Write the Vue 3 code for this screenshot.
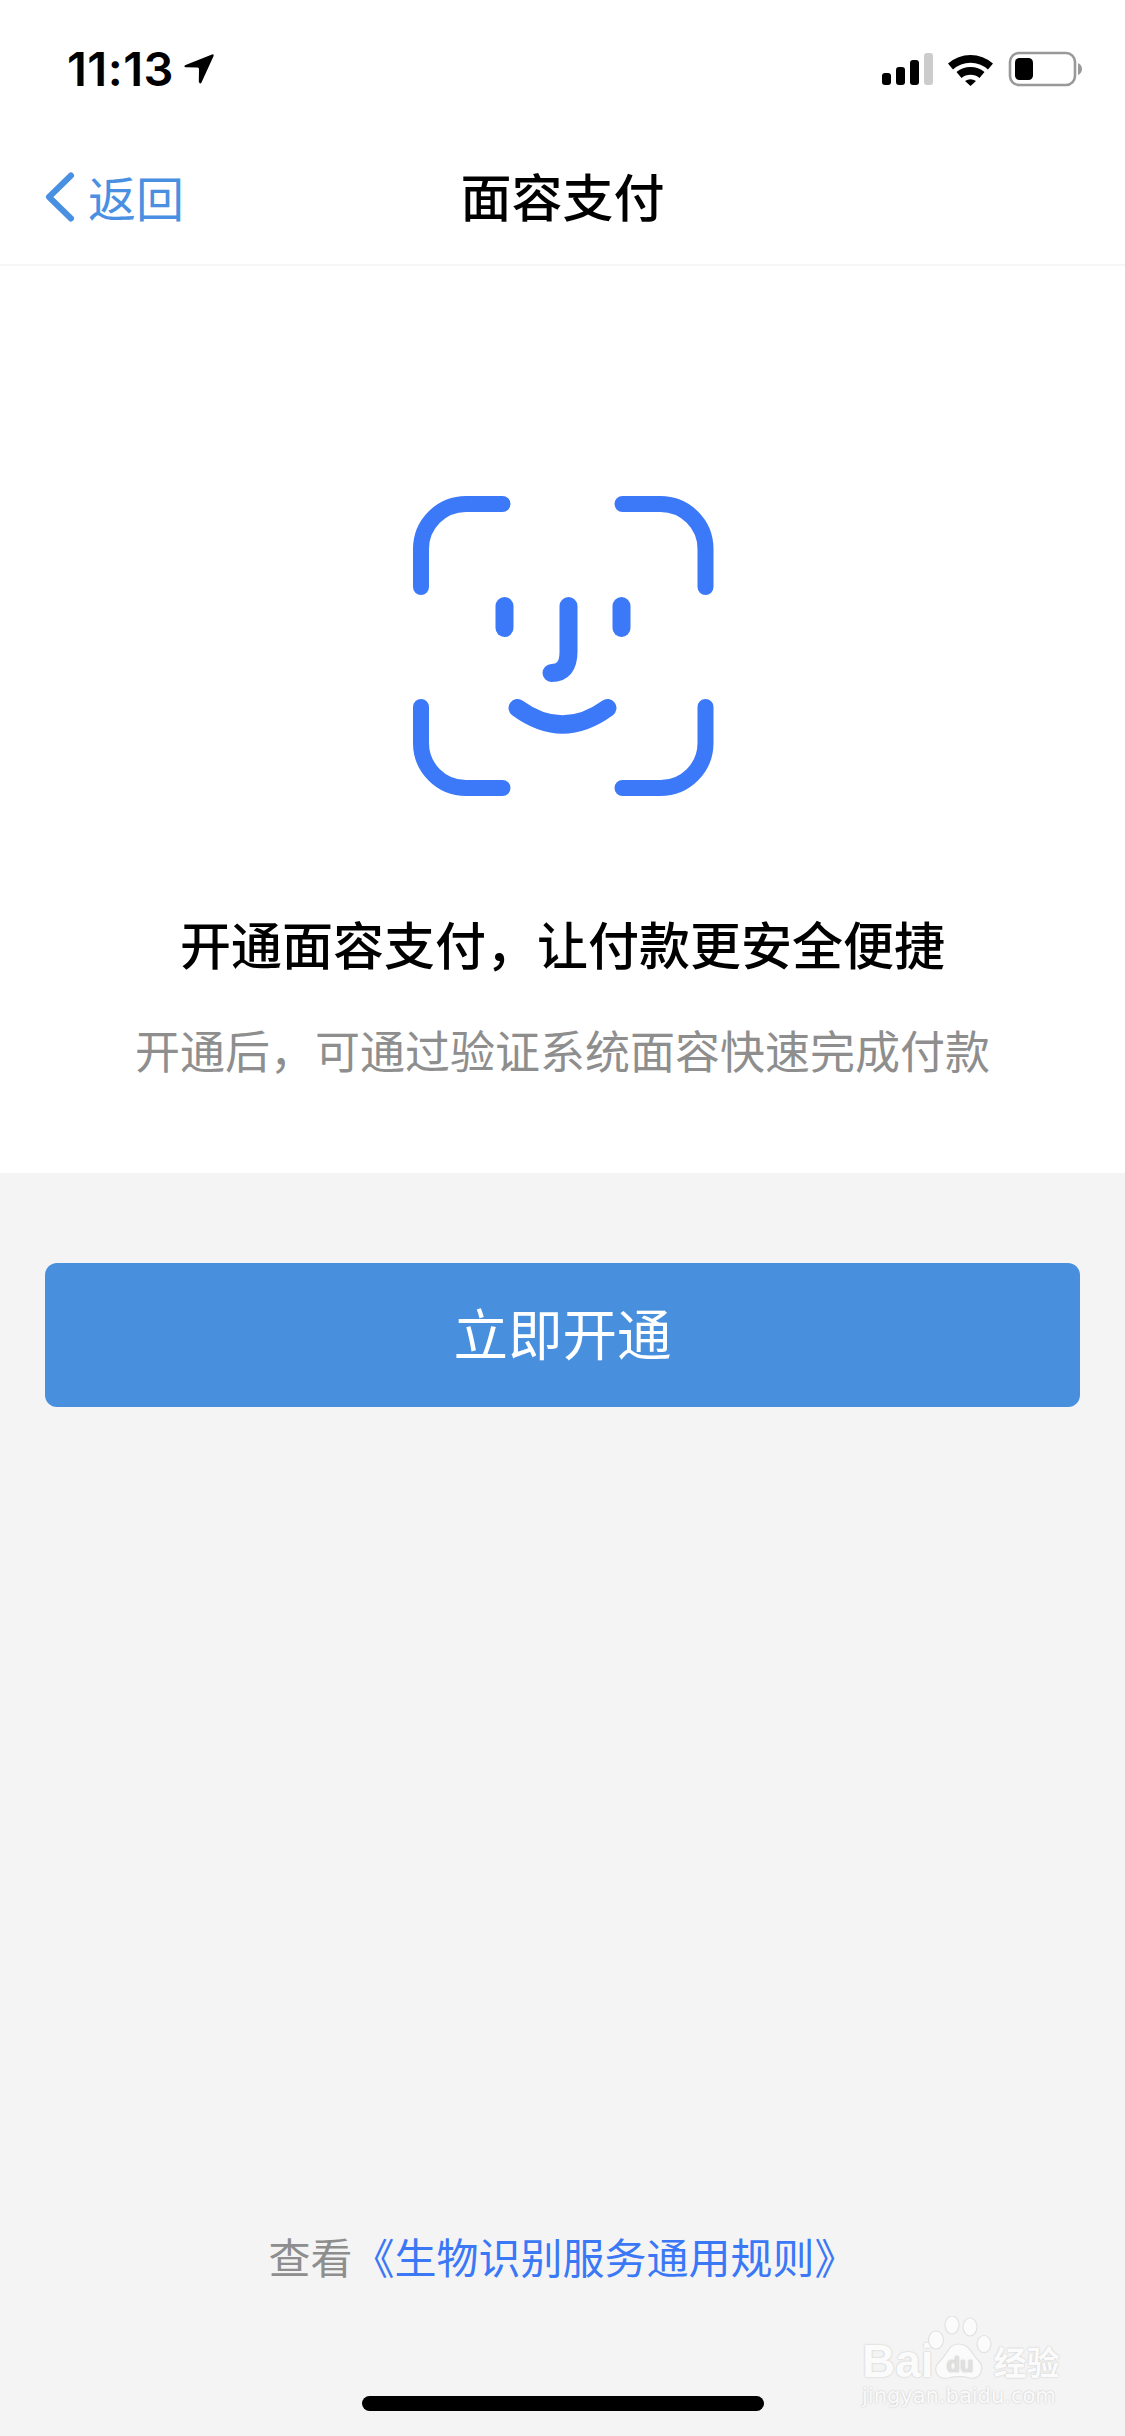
<script setup>
const bars = [
  { x: 882, y: 73, h: 12, c: '#000' },
  { x: 896, y: 67, h: 18, c: '#000' },
  { x: 910, y: 60, h: 25, c: '#000' },
  { x: 924, y: 53, h: 32, c: '#ccc' }
]
</script>

<template>
  <div class="page">
    <div class="top">
      <div class="status">
        <div class="clock">
          <span class="time">11:13</span>
          <svg class="arrow" width="30" height="30" viewBox="183 54 30 30">
            <path d="M211 54.4 L184.6 65 Q182 66.4 184.5 67.3 L196.5 67.6 Q198 67.7 198 69 L197.8 81.8 Q199 84.8 200.6 82.2 L212.6 56 Q213 53.9 211 54.4Z" fill="#000" />
          </svg>
        </div>
        <svg class="indicators" width="204" height="36" viewBox="880 51 204 36">
          <rect v-for="b in bars" :key="b.x" :x="b.x" :y="b.y" width="9" :height="b.h" rx="3" :fill="b.c" />
          <path d="M948 63.5 A34 34 0 0 1 993 63.5 L988 69.5 A26 26 0 0 0 953 69.5Z" fill="#000" />
          <path d="M956.5 72 A22 22 0 0 1 984.5 72 L979.5 78 A14 14 0 0 0 961.5 78Z" fill="#000" />
          <path d="M965 81 A10 10 0 0 1 976 81 L970.5 86Z" fill="#000" />
          <rect x="1010" y="53" width="65" height="32" rx="9" fill="none" stroke="#999" stroke-width="2.6" />
          <rect x="1015" y="58" width="18" height="22" rx="4.5" fill="#000" />
          <path d="M1078 63 Q1082 65 1082 69 Q1082 73 1078 75Z" fill="#999" />
        </svg>
      </div>
      <header class="nav">
        <div class="back">
          <svg class="chevron" width="32" height="52" viewBox="44 171 32 52">
            <path d="M71 175.5 L49 197 L71 218.5" fill="none" stroke="#4a90e2" stroke-width="6" stroke-linecap="round" stroke-linejoin="round" />
          </svg>
          <span class="back-label">返回</span>
        </div>
        <h1 class="title">面容支付</h1>
      </header>
    </div>

    <section class="hero">
      <svg class="face" width="302" height="302" viewBox="411.5 495 302 302">
        <g fill="none" stroke="#3c79f8" stroke-linecap="round" stroke-width="16">
          <path d="M420.5 587 V549 A45 45 0 0 1 465.5 504 H502" />
          <path d="M622 504 H660 A45 45 0 0 1 705 549 V587" />
          <path d="M420.5 707 V743 A45 45 0 0 0 465.5 788 H502" />
          <path d="M622 788 H660 A45 45 0 0 0 705 743 V707" />
        </g>
        <g fill="none" stroke="#3c79f8" stroke-linecap="round" stroke-width="18">
          <path d="M504 606 V628" />
          <path d="M621 606 V628" />
          <path d="M568 606 V652 Q568 673 551 673" />
          <path d="M517 708 Q562 741 607 708" />
        </g>
      </svg>
      <h2 class="heading">开通面容支付，让付款更安全便捷</h2>
      <p class="sub">开通后，可通过验证系统面容快速完成付款</p>
    </section>

    <main class="body">
      <button class="cta" type="button"><span class="cta-label">立即开通</span></button>
      <p class="rules">查看<span class="link">《生物识别服务通用规则》</span></p>
      <div class="home"></div>
    </main>

    <div class="mark">
      <div class="mark-logo">
        <span class="mark-bai">Bai</span>
        <svg class="paw" width="64" height="66" viewBox="0 0 64 66">
          <g fill="#fbfbfb" stroke="#e2e2e2" stroke-width="1.2">
            <ellipse cx="8" cy="24" rx="7.5" ry="9" />
            <ellipse cx="24" cy="9" rx="7" ry="9" />
            <ellipse cx="42" cy="11" rx="7" ry="9" />
            <ellipse cx="56" cy="28" rx="7" ry="8.5" />
            <path d="M31 28 C42 28 43 38 50 44 C58 52 52 64 42 62 C34 60 28 60 20 62 C8 64 4 52 12 45 C20 38 20 28 31 28Z" />
          </g>
          <text x="32" y="56" text-anchor="middle" class="mark-du">du</text>
        </svg>
        <span class="mark-cn">经验</span>
      </div>
      <div class="mark-url">jingyan.baidu.com</div>
    </div>
  </div>
</template>

<style scoped>
.page {
  position: relative;
  width: 1125px;
  height: 2436px;
  display: flex;
  flex-direction: column;
  background: #f4f4f4;
  overflow: hidden;
  font-family: "Noto Sans CJK SC", "Noto Sans", sans-serif;
}
.top {
  background: #fff;
}
.status {
  height: 132px;
  display: flex;
  justify-content: space-between;
  align-items: flex-start;
  padding: 51px 41px 0 67px;
  box-sizing: border-box;
}
.clock {
  display: flex;
  align-items: center;
  gap: 10px;
  height: 36px;
}
.time {
  font-family: Inter, "Liberation Sans", sans-serif;
  font-weight: 600;
  font-size: 47px;
  line-height: 36px;
  color: #000;
  letter-spacing: 0.5px;
}
.arrow,
.indicators,
.chevron,
.face,
.paw {
  display: block;
  flex: none;
}
.nav {
  position: relative;
  height: 134px;
  display: flex;
  align-items: center;
  justify-content: center;
  border-bottom: 2px solid #f6f6f6;
  box-sizing: border-box;
  padding-bottom: 7px;
}
.back {
  position: absolute;
  left: 44px;
  top: 0;
  bottom: 2px;
  display: flex;
  align-items: center;
  gap: 12px;
  color: #4a90e2;
  font-size: 48px;
}
.back-label {
  margin-bottom: 3px;
}
.title {
  margin: 0;
  font-size: 51px;
  font-weight: 500;
  line-height: 66px;
  color: #000;
}
.hero {
  height: 907px;
  background: #fff;
  display: flex;
  flex-direction: column;
  align-items: center;
  padding-top: 229px;
  box-sizing: border-box;
}
.heading {
  margin: 110px 0 0;
  font-size: 51px;
  font-weight: 500;
  line-height: 72px;
  color: #000;
}
.sub {
  margin: 39px 0 0;
  font-size: 45px;
  font-weight: 400;
  line-height: 64px;
  color: #8e8e8e;
}
.body {
  flex: 1;
  display: flex;
  flex-direction: column;
  align-items: center;
  padding: 90px 45px 0;
}
.cta {
  width: 100%;
  height: 144px;
  padding: 0 0 8px;
  border: 0;
  border-radius: 12px;
  background: #4890dd;
  color: #fff;
  font-family: inherit;
  font-size: 54.5px;
  font-weight: 400;
}
.cta-label {
  display: block;
}
.rules {
  margin: 819px 0 0;
  font-size: 42px;
  line-height: 60px;
  color: #8e8e8e;
}
.link {
  color: #3b78f6;
}
.home {
  width: 402px;
  height: 15px;
  margin-top: 110px;
  border-radius: 8px;
  background: #000;
}
.mark {
  position: absolute;
  left: 862px;
  top: 2316px;
  width: 204px;
  color: #fbfbfb;
  text-shadow: 0 0 2px #bdbdbd;
}
.mark-logo {
  display: flex;
  align-items: flex-end;
  height: 66px;
}
.mark-bai {
  font-family: "Liberation Sans", sans-serif;
  font-size: 46px;
  font-weight: 700;
  line-height: 42px;
}
.paw {
  margin-left: -6px;
}
.mark-du {
  font-family: "Liberation Sans", sans-serif;
  font-size: 22px;
  font-weight: 700;
  fill: #e0e0e0;
}
.mark-cn {
  font-size: 33px;
  font-weight: 700;
  line-height: 42px;
  margin-left: 2px;
}
.mark-url {
  font-family: "DejaVu Sans", sans-serif;
  font-size: 21px;
  line-height: 30px;
  white-space: nowrap;
  margin-top: -1px;
}
</style>

<style>
html, body { margin: 0; background: #f4f4f4; }
</style>
